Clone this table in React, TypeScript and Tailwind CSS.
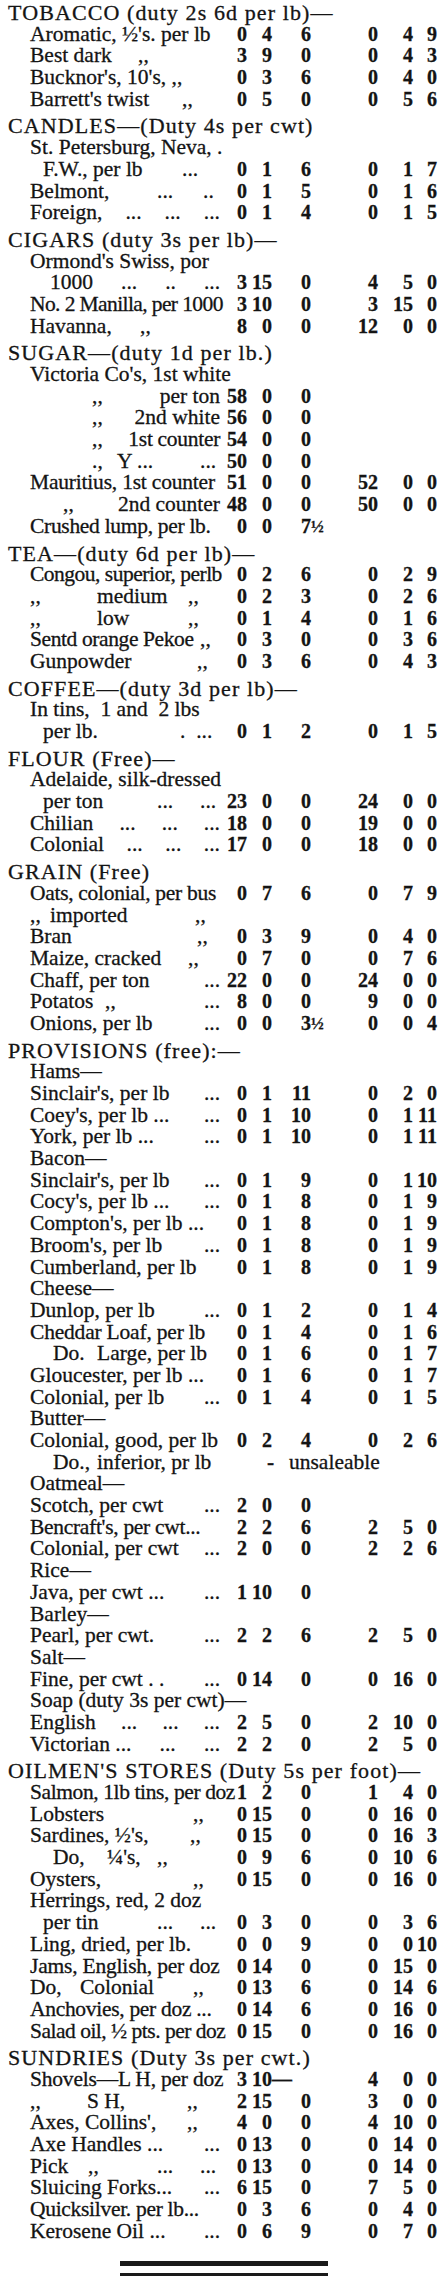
import clsx from "clsx"

type Seg = string | [string, string]

interface Row {
  head?: string
  l?: Seg[]
  pl?: string
  jb?: boolean
  p?: string[]
  q?: string[]
  unsaleable?: boolean
}

const H = (head: string): Row => ({ head })

function R(l: Seg[] | string, p = "", q = "", o: Partial<Row> = {}): Row {
  return {
    l: typeof l === "string" ? [l] : l,
    p: p ? p.split(" ") : undefined,
    q: q ? q.split(" ") : undefined,
    ...o,
  }
}

const SUB = "pl-[43px]"
const DO = "pl-[53px]"
const END: Seg = ["...", "ml-auto"]
const jb = { jb: true }

const rows: Row[] = [
  H("TOBACCO (duty 2s 6d per lb)—"),
  R("Aromatic, ½'s. per lb", "0 4 6", "0 4 9"),
  R([["Best dark", "w-[108px]"], ",,"], "3 9 0", "0 4 3"),
  R("Bucknor's, 10's, ,,", "0 3 6", "0 4 0"),
  R([["Barrett's twist", "w-[152px]"], ",,"], "0 5 0", "0 5 6"),
  H("CANDLES—(Duty 4s per cwt)"),
  R("St. Petersburg, Neva, ."),
  R([["F.W., per lb", "w-[139px]"], "..."], "0 1 6", "0 1 7", { pl: SUB }),
  R([["Belmont,", "w-[127px]"], ["...", "w-[46px]"], ".."], "0 1 5", "0 1 6"),
  R(["Foreign,", "...", "...", "..."], "0 1 4", "0 1 5", jb),
  H("CIGARS (duty 3s per lb)—"),
  R("Ormond's Swiss, por"),
  R(["1000", "...", "..", "..."], "3 15 0", "4 5 0", { pl: "pl-[50px]", jb: true }),
  R([["No. 2 Manilla, per 1000", "tracking-[-0.6px]"]], "3 10 0", "3 15 0"),
  R([["Havanna,", "w-[110px]"], ",,"], "8 0 0", "12 0 0"),
  H("SUGAR—(duty 1d per lb.)"),
  R("Victoria Co's, 1st white"),
  R([",,", "per ton"], "58 0 0", "", { pl: "pl-[92px]", jb: true }),
  R([",,", "2nd white"], "56 0 0", "", { pl: "pl-[92px]", jb: true }),
  R([",,", ["1st counter", "tracking-[-0.3px]"]], "54 0 0", "", { pl: "pl-[92px]", jb: true }),
  R([[".,", "w-[25px]"], ["Y ...", "w-[83px]"], "..."], "50 0 0", "", { pl: "pl-[92px]" }),
  R([["Mauritius, 1st counter", "tracking-[-0.2px]"]], "51 0 0", "52 0 0"),
  R([",,", "2nd counter"], "48 0 0", "50 0 0", { pl: "pl-[63px]", jb: true }),
  R([["Crushed lump, per lb.", "tracking-[-0.3px]"]], "0 0 7½"),
  H("TEA—(duty 6d per lb)—"),
  R([["Congou, superior, perlb", "tracking-[-0.5px]"]], "0 2 6", "0 2 9"),
  R([[",,", "w-[67px]"], ["medium", "w-[91px]"], ",,"], "0 2 3", "0 2 6"),
  R([[",,", "w-[67px]"], ["low", "w-[91px]"], ",,"], "0 1 4", "0 1 6"),
  R([["Sentd orange Pekoe", "w-[170px] tracking-[-0.4px]"], ",,"], "0 3 0", "0 3 6"),
  R([["Gunpowder", "w-[167px]"], ",,"], "0 3 6", "0 4 3"),
  H("COFFEE—(duty 3d per lb)—"),
  R("In tins,  1 and  2 lbs"),
  R([["per lb.", "w-[137px]"], ".  ..."], "0 1 2", "0 1 5", { pl: SUB }),
  H("FLOUR (Free)—"),
  R("Adelaide, silk-dressed"),
  R([["per ton", "w-[114px]"], ["...", "w-[43px]"], "..."], "23 0 0", "24 0 0", { pl: SUB }),
  R(["Chilian", "...", "...", "..."], "18 0 0", "19 0 0", jb),
  R(["Colonial", "...", "...", "..."], "17 0 0", "18 0 0", jb),
  H("GRAIN (Free)"),
  R([["Oats, colonial, per bus", "tracking-[-0.3px]"]], "0 7 6", "0 7 9"),
  R([[",,", "w-[20px]"], ["imported", "w-[145px]"], ",,"]),
  R([["Bran", "w-[167px]"], ",,"], "0 3 9", "0 4 0"),
  R([["Maize, cracked", "w-[158px]"], ",,"], "0 7 0", "0 7 6"),
  R(["Chaff, per ton", END], "22 0 0", "24 0 0"),
  R([["Potatos", "w-[75px]"], ",,", END], "8 0 0", "9 0 0"),
  R(["Onions, per lb", END], "0 0 3½", "0 0 4"),
  H("PROVISIONS (free):—"),
  R("Hams—"),
  R(["Sinclair's, per lb", END], "0 1 11", "0 2 0"),
  R(["Coey's, per lb ...", END], "0 1 10", "0 1 11"),
  R(["York, per lb ...", END], "0 1 10", "0 1 11"),
  R("Bacon—"),
  R(["Sinclair's, per lb", END], "0 1 9", "0 1 10"),
  R(["Cocy's, per lb ...", END], "0 1 8", "0 1 9"),
  R("Compton's, per lb ...", "0 1 8", "0 1 9"),
  R(["Broom's, per lb", END], "0 1 8", "0 1 9"),
  R("Cumberland, per lb", "0 1 8", "0 1 9"),
  R("Cheese—"),
  R(["Dunlop, per lb", END], "0 1 2", "0 1 4"),
  R([["Cheddar Loaf, per lb", "tracking-[-0.2px]"]], "0 1 4", "0 1 6"),
  R([["Do.", "w-[44px]"], "Large, per lb"], "0 1 6", "0 1 7", { pl: DO }),
  R("Gloucester, per lb ...", "0 1 6", "0 1 7"),
  R(["Colonial, per lb", END], "0 1 4", "0 1 5"),
  R("Butter—"),
  R("Colonial, good, per lb", "0 2 4", "0 2 6"),
  R([["Do.,", "w-[44px]"], "inferior, pr lb"], "", "", { pl: DO, unsaleable: true }),
  R("Oatmeal—"),
  R(["Scotch, per cwt", END], "2 0 0"),
  R([["Bencraft's, per cwt...", "tracking-[-0.3px]"]], "2 2 6", "2 5 0"),
  R(["Colonial, per cwt", END], "2 0 0", "2 2 6"),
  R("Rice—"),
  R(["Java, per cwt ...", END], "1 10 0"),
  R("Barley—"),
  R(["Pearl, per cwt.", END], "2 2 6", "2 5 0"),
  R("Salt—"),
  R(["Fine, per cwt . .", END], "0 14 0", "0 16 0"),
  R("Soap (duty 3s per cwt)—"),
  R(["English", "...", "...", "..."], "2 5 0", "2 10 0", jb),
  R(["Victorian ...", "...", "..."], "2 2 0", "2 5 0", jb),
  H("OILMEN'S STORES (Duty 5s per foot)—"),
  R([["Salmon, 1lb tins, per doz", "tracking-[-0.4px]"]], "1 2 0", "1 4 0"),
  R([["Lobsters", "w-[163px]"], ",,"], "0 15 0", "0 16 0"),
  R([["Sardines, ½'s,", "w-[160px]"], ",,"], "0 15 0", "0 16 3"),
  R([["Do,", "w-[54px]"], ["¼'s,", "w-[50px]"], ",,"], "0 9 6", "0 10 6", { pl: DO }),
  R([["Oysters,", "w-[163px]"], ",,"], "0 15 0", "0 16 0"),
  R("Herrings, red, 2 doz"),
  R([["per tin", "w-[114px]"], ["...", "w-[43px]"], "..."], "0 3 0", "0 3 6", { pl: SUB }),
  R("Ling, dried, per lb.", "0 0 9", "0 0 10"),
  R([["Jams, English, per doz", "tracking-[-0.2px]"]], "0 14 0", "0 15 0"),
  R([["Do,", "w-[50px]"], ["Colonial", "w-[113px]"], ",,"], "0 13 6", "0 14 6"),
  R([["Anchovies, per doz ...", "tracking-[-0.3px]"]], "0 14 6", "0 16 0"),
  R([["Salad oil, ½ pts. per doz", "tracking-[-0.5px]"]], "0 15 0", "0 16 0"),
  H("SUNDRIES (Duty 3s per cwt.)"),
  R([["Shovels—L H, per doz", "tracking-[-0.2px]"]], "3 10 —", "4 0 0"),
  R([[",,", "w-[57px]"], ["S H,", "w-[100px]"], ",,"], "2 15 0", "3 0 0"),
  R([["Axes, Collins',", "w-[157px]"], ",,"], "4 0 0", "4 10 0"),
  R(["Axe Handles ...", "..."], "0 13 0", "0 14 0", jb),
  R([["Pick", "w-[58px]"], [",,", "w-[69px]"], ["...", "w-[43px]"], "..."], "0 13 0", "0 14 0"),
  R(["Sluicing Forks...", "..."], "6 15 0", "7 5 0", jb),
  R([["Quicksilver. per lb...", "tracking-[-0.3px]"]], "0 3 6", "0 4 0"),
  R(["Kerosene Oil ...", "..."], "0 6 9", "0 7 0", jb),
]

function Pence({ v, className }: { v?: string; className: string }) {
  if (!v) return <span className={className} />
  if (v === "—") {
    return <span className={clsx(className, "flex justify-start")}>—</span>
  }
  const frac = v.match(/^(\d+)([½¼])$/)
  return (
    <span className={clsx(className, "flex justify-end")}>
      {frac ? (
        <>
          {frac[1]}
          <span className="inline-block w-0 text-[17px]">{frac[2]}</span>
        </>
      ) : (
        v
      )}
    </span>
  )
}

function Prices({ p, q }: { p?: string[]; q?: string[] }) {
  return (
    <div className="flex font-bold text-[20px]">
      <span className="w-[27px] text-right">{p?.[0]}</span>
      <span className="w-[25px] text-right">{p?.[1]}</span>
      <Pence v={p?.[2]} className="w-[39px]" />
      <span className="w-[67px] text-right">{q?.[0]}</span>
      <span className="w-[35px] text-right">{q?.[1]}</span>
      <Pence v={q?.[2]} className="w-[24px]" />
    </div>
  )
}

function Line({ r, first }: { r: Row; first: boolean }) {
  if (r.head) {
    return (
      <div
        className={clsx(
          "h-[21.7px] pl-2 text-[22px] tracking-[1.1px] whitespace-nowrap",
          !first && "mt-[5px]"
        )}
      >
        {r.head}
      </div>
    )
  }
  return (
    <div className="flex h-[21.7px] items-baseline whitespace-nowrap">
      <div
        className={clsx(
          "flex w-[220px] shrink-0 whitespace-pre",
          r.pl ?? "pl-[30px]",
          r.jb && "justify-between"
        )}
      >
        {r.l?.map((s, i) =>
          typeof s === "string" ? (
            <span key={i}>{s}</span>
          ) : (
            <span key={i} className={clsx("shrink-0", s[1])}>
              {s[0]}
            </span>
          )
        )}
      </div>
      {r.unsaleable ? (
        <div className="flex pl-[47px]">
          <span className="w-[22px] font-bold">-</span>
          <span>unsaleable</span>
        </div>
      ) : (
        (r.p || r.q) && <Prices p={r.p} q={r.q} />
      )}
    </div>
  )
}

export default function App() {
  return (
    <div className="min-h-[2280px] w-[440px] bg-white pt-[2px] font-['Liberation_Serif',serif] text-[21.5px] leading-[21.7px] text-[#141414] [-webkit-text-stroke:0.3px]">
      {rows.map((r, i) => (
        <Line key={i} r={r} first={i === 0} />
      ))}
      <div className="mt-[19px] ml-[120px] w-[208px]">
        <div className="h-[5px] bg-[#1a1a1a]" />
        <div className="mt-[7px] h-[3px] bg-[#1a1a1a]" />
      </div>
    </div>
  )
}
